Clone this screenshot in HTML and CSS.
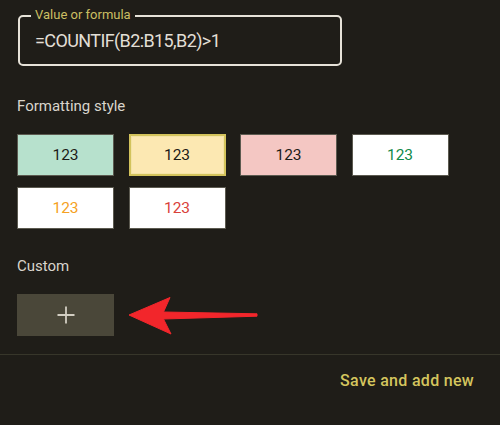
FILE: index.html
```html
<!DOCTYPE html>
<html>
<head>
<meta charset="utf-8">
<link rel="stylesheet" href="styles.css">
</head>
<body>
<div class="panel">
  <div class="field">
    <span class="field-label">Value or formula</span>
    <div class="field-value">=COUNTIF(B2:B15,B2)&gt;1</div>
  </div>

  <div class="section-title fmt-title">Formatting style</div>
  <div class="swatches">
    <div class="swatch sw-green">123</div>
    <div class="swatch sw-yellow selected">123</div>
    <div class="swatch sw-pink">123</div>
    <div class="swatch sw-white t-green">123</div>
    <div class="swatch sw-white t-orange">123</div>
    <div class="swatch sw-white t-red">123</div>
  </div>

  <div class="section-title custom-title">Custom</div>
  <div class="custom-row">
    <div class="add-btn">
      <svg width="20" height="20" viewBox="0 0 20 20"><path d="M10 1.5V18.5M1.5 10H18.5" stroke="#d2cec2" stroke-width="1.8"/></svg>
    </div>
    <svg class="arrow" width="140" height="46" viewBox="0 0 140 46">
      <path d="M4 22 L45 4.5 L38.5 19 L132 20.8 L132 23.2 L38.5 26 L46 41 Z" fill="#f2262b" stroke="#f2262b" stroke-width="1" stroke-linejoin="round"/>
    </svg>
  </div>
</div>
<div class="footer">
  <span class="save">Save and add new</span>
</div>
</body>
</html>
```

FILE: styles.css
```css
html, body {
  margin: 0;
  padding: 0;
  background: #1f1d18;
  width: 500px;
  height: 425px;
  overflow: hidden;
  font-family: Roboto, "Liberation Sans", sans-serif;
}

.panel {
  padding: 15px 0 18px 17px;
}

.field {
  position: relative;
  box-sizing: border-box;
  width: 324px;
  height: 51px;
  margin-left: 1px;
  border: 2px solid #e6e2d8;
  border-radius: 5px;
  padding: 14px 0 0 15px;
}

.field-label {
  position: absolute;
  top: -10px;
  left: 11px;
  padding: 0 4px;
  background: #1f1d18;
  color: #cbbf63;
  font-size: 13px;
  line-height: 16px;
}

.field-value {
  color: #e2dfd6;
  font-size: 18px;
  line-height: 20px;
  letter-spacing: -0.6px;
}

.section-title {
  color: #d9d5cc;
  font-size: 15px;
  line-height: 20px;
}

.fmt-title {
  margin-top: 30px;
}

.swatches {
  margin-top: 18px;
  display: grid;
  grid-template-columns: repeat(4, 97px);
  grid-auto-rows: 42px;
  column-gap: 14.5px;
  row-gap: 11px;
}

.swatch {
  box-sizing: border-box;
  border: 1px solid #5c5a50;
  display: flex;
  align-items: center;
  justify-content: center;
  font-size: 15.5px;
  color: #1c1b17;
}

.sw-green { background: #b7e1cd; }
.sw-yellow { background: #fce8b2; }
.sw-pink { background: #f4c7c3; }
.sw-white { background: #ffffff; }

.selected {
  border: 2px solid #d3c35c;
  box-shadow: inset 0 0 0 1px #f3e3a6;
}

.t-green { color: #0f8a4a; }
.t-orange { color: #f5a123; }
.t-red { color: #d9413a; }

.custom-title {
  margin-top: 27px;
}

.custom-row {
  position: relative;
  margin-top: 18px;
  height: 42px;
}

.add-btn {
  width: 97px;
  height: 42px;
  background: #4a4739;
  display: flex;
  align-items: center;
  justify-content: center;
}

.arrow {
  position: absolute;
  left: 108px;
  top: -1px;
}

.footer {
  border-top: 1px solid #37362a;
  padding: 16px 26px 0 0;
  display: flex;
  justify-content: flex-end;
}

.save {
  color: #d4c55e;
  font-size: 16px;
  line-height: 20px;
  font-weight: 500;
  letter-spacing: 0.3px;
}
```
